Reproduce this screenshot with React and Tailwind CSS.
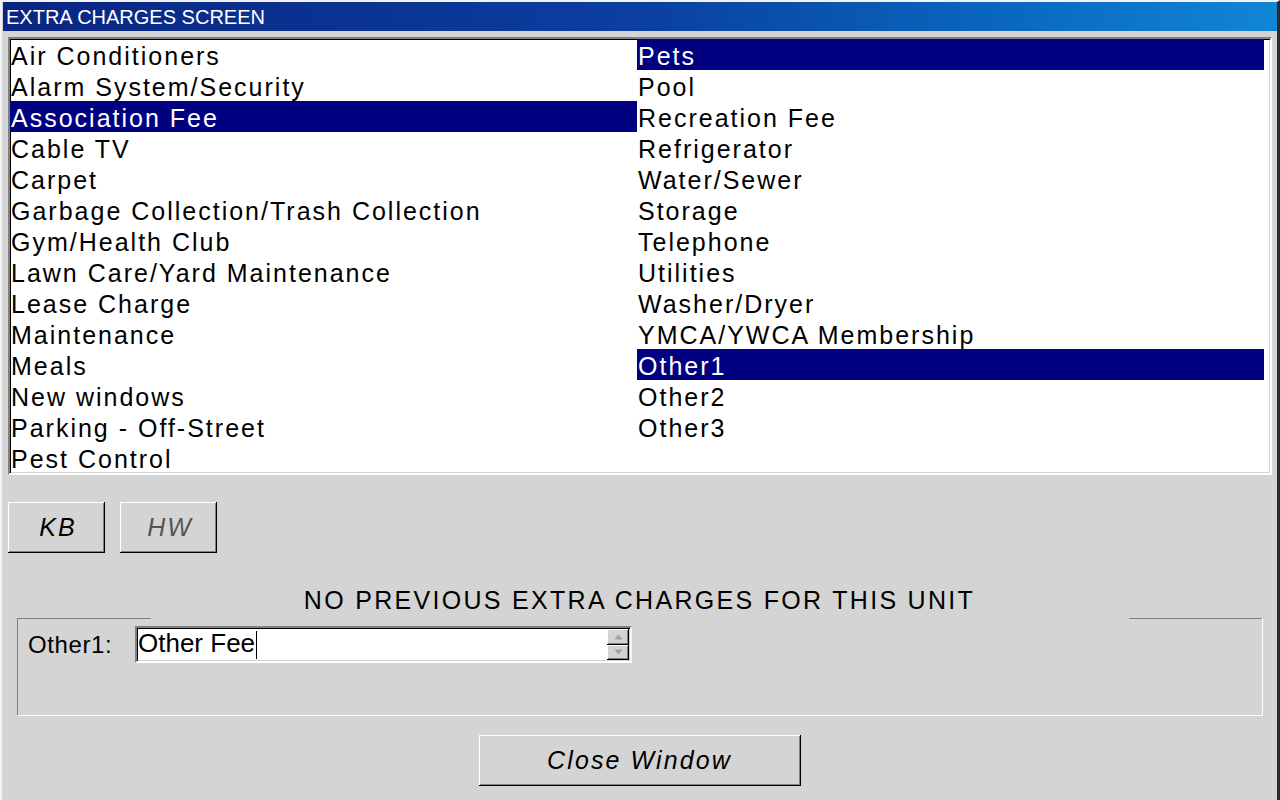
import React from "react";

const leftItems = [
  "Air Conditioners",
  "Alarm System/Security",
  "Association Fee",
  "Cable TV",
  "Carpet",
  "Garbage Collection/Trash Collection",
  "Gym/Health Club",
  "Lawn Care/Yard Maintenance",
  "Lease Charge",
  "Maintenance",
  "Meals",
  "New windows",
  "Parking - Off-Street",
  "Pest Control",
];

const rightItems = [
  "Pets",
  "Pool",
  "Recreation Fee",
  "Refrigerator",
  "Water/Sewer",
  "Storage",
  "Telephone",
  "Utilities",
  "Washer/Dryer",
  "YMCA/YWCA Membership",
  "Other1",
  "Other2",
  "Other3",
];

const selected = ["Association Fee", "Pets", "Other1"];

function Row({ label }) {
  const on = selected.includes(label);
  return (
    <div
      className={`h-[31px] pt-[3px] pl-[1px] text-[25px] leading-[28px] tracking-[2px] whitespace-nowrap ${
        on ? "bg-[#000080] text-white" : "text-black"
      }`}
    >
      {label}
    </div>
  );
}

// raised 3d button like the old motif/win look
const raised =
  "bg-[#d4d4d4] shadow-[inset_-1px_-1px_#000,inset_1px_1px_#fff,inset_-2px_-2px_#808080]";

function Spin({ up }) {
  return (
    <div className={`flex-1 flex items-center justify-center ${raised}`}>
      <svg width="9" height="6" viewBox="0 0 9 6">
        {up ? (
          <polygon points="4.5,0.5 8.5,5.5 0.5,5.5" fill="#a0a0a0" />
        ) : (
          <polygon points="0.5,0.5 8.5,0.5 4.5,5.5" fill="#a0a0a0" />
        )}
      </svg>
    </div>
  );
}

export default function App() {
  return (
    <div className="w-[1280px] h-[800px] overflow-hidden bg-[#d4d4d4] border-t-2 border-l-2 border-[#f2f2f2] border-r-[3px] border-r-[#2a2a2a] font-['Liberation_Sans',Arial,sans-serif] flex flex-col">
      {/* title bar */}
      <div className="h-[29px] ml-[1px] pl-[3px] pt-[2px] bg-gradient-to-r from-[#0a2582] via-[#0b3fa0] to-[#1186d4] text-white text-[20px] leading-[27px] whitespace-nowrap">
        EXTRA CHARGES SCREEN
      </div>

      {/* charges list */}
      <div className="mt-[6px] ml-[6px] mr-[5px] h-[438px] bg-white border-2 border-t-[#808080] border-l-[#808080] border-b-white border-r-white shadow-[inset_1px_1px_#000,inset_-1px_-1px_#d4d4d4] flex">
        <div className="w-[627px]">
          {leftItems.map((t) => (
            <Row key={t} label={t} />
          ))}
        </div>
        <div className="w-[627px]">
          {rightItems.map((t) => (
            <Row key={t} label={t} />
          ))}
        </div>
      </div>

      {/* KB / HW */}
      <div className="mt-[27px] ml-[6px] flex gap-[15px]">
        <button className={`w-[97px] h-[51px] pl-[3px] italic text-[25px] tracking-[2px] text-black ${raised}`}>
          KB
        </button>
        <button className={`w-[97px] h-[51px] pl-[3px] italic text-[25px] tracking-[2px] text-[#555555] ${raised}`}>
          HW
        </button>
      </div>

      <div className="mt-[32px] h-[30px] text-center text-[25px] leading-[30px] tracking-[2.3px] text-black whitespace-nowrap">
        NO PREVIOUS EXTRA CHARGES FOR THIS UNIT
      </div>

      {/* group box */}
      <div className="mt-[3px] ml-[15px] mr-[14px] h-[98px] flex flex-col border-l border-l-[#808080] border-b border-b-white border-r border-r-white">
        <div className="h-px flex">
          <div className="w-[133px] bg-[#808080]" />
          <div className="flex-1" />
          <div className="w-[133px] bg-[#808080]" />
        </div>
        <div className="mt-[7px] flex items-center">
          <div className="w-[117px] pl-[10px] text-[24px] tracking-[0.6px] text-black">Other1:</div>
          <div className="w-[497px] h-[37px] bg-white border-2 border-t-[#808080] border-l-[#808080] border-b-white border-r-[#f4f4f4] shadow-[inset_1px_1px_#000,inset_-1px_-1px_#d4d4d4] flex">
            <div className="flex-1 flex items-center pl-[1px] pb-[2px] text-[26px] text-black">
              Other Fee
              <span className="inline-block w-px h-[28px] bg-black ml-[1px] mt-[2px]" />
            </div>
            <div className="w-[23px] flex flex-col py-[1px] pr-[1px]">
              <Spin up />
              <Spin />
            </div>
          </div>
        </div>
      </div>

      <div className="mt-[19px] flex justify-center">
        <button className={`w-[322px] h-[51px] italic text-[25px] tracking-[2.1px] text-black ${raised}`}>
          Close Window
        </button>
      </div>
    </div>
  );
}
